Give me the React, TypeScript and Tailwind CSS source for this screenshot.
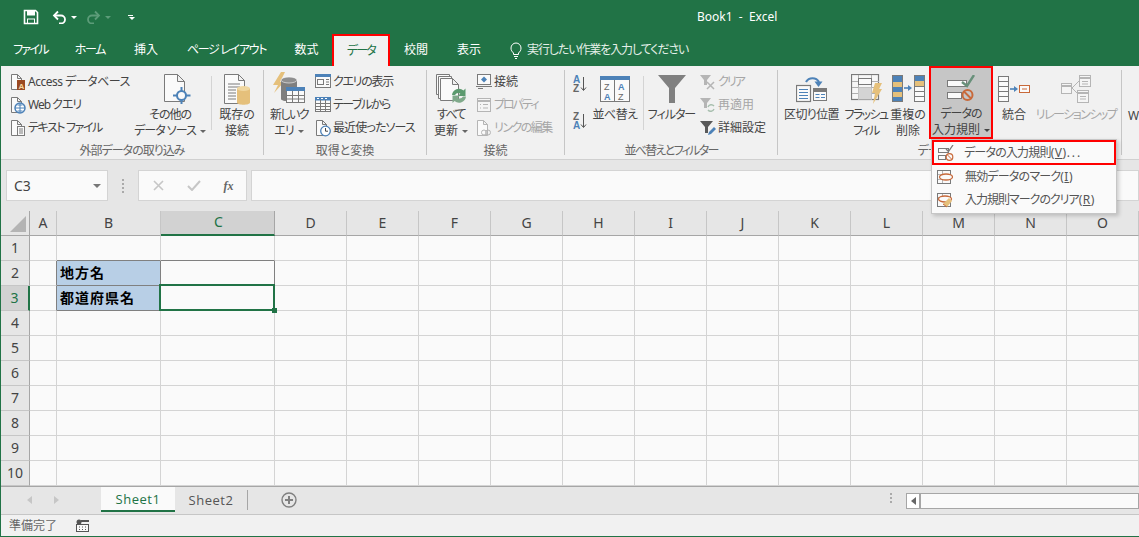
import React from "react";

type IconProps = { w: number; h: number; children: React.ReactNode };

const Icon = ({ w, h, children }: IconProps) => (
  <svg width={w} height={h} viewBox={`0 0 ${w} ${h}`} fill="none" className="block shrink-0">
    {children}
  </svg>
);

const GRAY = "#7a7a7a";
const BLUE = "#4d82b8";
const TAN = "#e5c07b";
const RUST = "#c8693a";
const FAINT = "#b5b5b5";

// small file outline used by many ribbon icons
const Doc = ({ stroke = GRAY }: { stroke?: string }) => (
  <path d="M1.5 1.5h6l4 4v11h-10zM7.5 1.5v4h4" stroke={stroke} fill="#fafafa" />
);

const Caret = ({ color = "#666" }: { color?: string }) => (
  <span
    className="inline-block ml-1 align-middle w-0 h-0 border-l-[3px] border-r-[3px] border-t-[3px] border-l-transparent border-r-transparent"
    style={{ borderTopColor: color }}
  />
);

const SaveIcon = () => (
  <Icon w={16} h={16}>
    <path d="M1.5 1.5h11l2 2v11h-13z" stroke="#fff" strokeWidth="1.6" />
    <rect x="4" y="2" width="8" height="4.5" fill="#fff" />
    <rect x="4.5" y="10" width="7" height="4.5" stroke="#fff" />
  </Icon>
);

const UndoIcon = ({ color = "#fff", flip = false }: { color?: string; flip?: boolean }) => (
  <Icon w={15} h={14}>
    <g transform={flip ? "translate(15 0) scale(-1 1)" : undefined}>
      <path d="M6 1.5 2 5.5l4 4" stroke={color} strokeWidth="1.8" />
      <path d="M2.5 5.5h6.5a4 4 0 0 1 0 8H7" stroke={color} strokeWidth="1.8" />
    </g>
  </Icon>
);

const AccessIcon = () => (
  <Icon w={16} h={18}>
    <Doc />
    <rect x="7" y="7" width="8" height="10" fill="#9b4a22" />
    <text x="8.5" y="15.5" fontSize="8" fontWeight="700" fill="#f5d7a0" fontFamily="Liberation Sans">A</text>
  </Icon>
);

const WebIcon = () => (
  <Icon w={16} h={18}>
    <Doc />
    <circle cx="10" cy="12" r="5" fill="#fff" stroke={BLUE} strokeWidth="1.5" />
    <path d="M5 12h10M10 7v10M7.5 9h5M7.5 15h5" stroke={BLUE} />
  </Icon>
);

const TextFileIcon = () => (
  <Icon w={16} h={18}>
    <Doc />
    <rect x="7.5" y="7.5" width="7" height="9" fill="#fafafa" stroke={GRAY} />
    <path d="M9 10h4M9 12h4M9 14h4" stroke={GRAY} />
  </Icon>
);

const OtherSourceIcon = () => (
  <Icon w={28} h={32}>
    <path d="M1.5 1.5h13l7 7v20h-20zM14.5 1.5v7h7" stroke={GRAY} fill="#fafafa" />
    <circle cx="18.5" cy="22.5" r="4.5" stroke={BLUE} strokeWidth="2" fill="#fafafa" />
    <path d="M18.5 14v4M18.5 27v4M10 22.5h4M23 22.5h4.5" stroke={BLUE} strokeWidth="2" />
  </Icon>
);

const ExistingIcon = () => (
  <Icon w={28} h={32}>
    <path d="M1.5 1.5h14l6 6v23h-20zM15.5 1.5v6h6" stroke={GRAY} fill="#fafafa" />
    <path d="M5 11h12M5 14h12M5 17h8M5 20h8M5 23h8M5 26h8" stroke={GRAY} />
    <path d="M14 15.5v14c0 3 13 3 13 0v-14z" fill={TAN} />
    <ellipse cx="20.5" cy="15.5" rx="6.5" ry="2.5" fill="#f0d7a0" />
  </Icon>
);

const NewQueryIcon = () => (
  <Icon w={34} h={34}>
    <path d="M9 0 1 13h5L2 21l10-11H8l5-10z" fill={TAN} />
    <path d="M9 8v19c0 3 16 3 16 0V8z" fill="#7f7f7f" />
    <ellipse cx="17" cy="8" rx="8" ry="3" fill="#8f8f8f" stroke="#fafafa" strokeWidth=".6" />
    <rect x="14.5" y="15.5" width="18" height="15" fill="#fafafa" stroke={GRAY} />
    <rect x="14" y="15" width="19" height="4" fill={BLUE} />
    <path d="M14.5 23.5h18M14.5 27h18M20.5 19v12M26.5 19v12" stroke={GRAY} />
  </Icon>
);

const ShowQueryIcon = () => (
  <Icon w={16} h={15}>
    <rect x=".5" y=".5" width="15" height="13" fill="#fafafa" stroke={GRAY} />
    <rect x="0" y="0" width="16" height="3" fill={BLUE} />
    <path d="M11 5.5h3M11 8h3M11 10.5h3" stroke={GRAY} />
    <rect x="2.5" y="5.5" width="6" height="5" stroke={GRAY} />
  </Icon>
);

const TableIcon = () => (
  <Icon w={16} h={16}>
    <rect x=".5" y=".5" width="15" height="14" fill="#fafafa" stroke={GRAY} />
    <rect x="0" y="0" width="16" height="3.5" fill={BLUE} />
    <path d="M2 1.5h2M6 1.5h2M10 1.5h2" stroke="#fff" />
    <path d="M1 6.5h14M1 9.5h14M1 12.5h14M5.5 3v11M10.5 3v11" stroke={GRAY} />
  </Icon>
);

const RecentIcon = () => (
  <Icon w={16} h={18}>
    <Doc />
    <circle cx="10.5" cy="12" r="4.8" fill="#fff" stroke={BLUE} strokeWidth="1.3" />
    <path d="M10.5 9v3.2h2.5" stroke="#444" />
  </Icon>
);

const RefreshIcon = () => (
  <Icon w={32} h={32}>
    <path d="M1.5 1.5h13v20h-13z" stroke={GRAY} fill="#fafafa" />
    <path d="M3.5 3.5h13v22h-13z" stroke={GRAY} fill="#fafafa" />
    <path d="M5.5 5.5h12l6 6v16h-18zM17.5 5.5v6h6" stroke={GRAY} fill="#fafafa" />
    <path d="M17 22a7 7 0 0 1 11.5-4.5l2-2v7.5H23l2.4-2.4a4 4 0 0 0-5.4 1.4z" fill="#5b9a6e" />
    <path d="M31 23.5a7 7 0 0 1-11.5 4.5l-2 2v-7.5H25l-2.4 2.4a4 4 0 0 0 5.4-1.4z" fill="#7fa98a" />
  </Icon>
);

const ConnectIcon = () => (
  <Icon w={16} h={15}>
    <rect x="1.5" y=".5" width="13" height="10" fill="#fafafa" stroke={GRAY} />
    <path d="M8 2.5 11 5.5 8 8.5 5 5.5z" fill={BLUE} />
    <path d="M0 12.5h16" stroke={GRAY} />
    <path d="M2 14.5h5" stroke={GRAY} />
  </Icon>
);

const PropertyIcon = () => (
  <Icon w={16} h={16}>
    <rect x="1.5" y="1.5" width="13" height="13" fill="#f5f5f5" stroke={FAINT} />
    <path d="M1 4h14" stroke={FAINT} strokeWidth="2" />
    <path d="M4 7.5h1M7 7.5h5M4 11h1M7 11h5" stroke={FAINT} />
  </Icon>
);

const LinkEditIcon = () => (
  <Icon w={16} h={18}>
    <Doc stroke={FAINT} />
    <circle cx="8" cy="13.5" r="2.5" stroke={FAINT} />
    <circle cx="12" cy="13.5" r="2.5" stroke={FAINT} />
  </Icon>
);

const SortSmall = ({ top, bottom }: { top: string; bottom: string }) => (
  <div className="flex items-center">
    <div className="flex flex-col text-[10px] leading-[9px] font-bold font-['Liberation_Sans',sans-serif]">
      <span className={top === "A" ? "text-[#4d82b8]" : "text-[#666]"}>{top}</span>
      <span className={bottom === "A" ? "text-[#4d82b8]" : "text-[#666]"}>{bottom}</span>
    </div>
    <Icon w={7} h={16}>
      <path d="M3.5 1v13M1 11.5l2.5 3 2.5-3" stroke="#555" />
    </Icon>
  </div>
);

const SortIcon = () => (
  <Icon w={30} h={26}>
    <rect x=".5" y=".5" width="29" height="25" fill="#fafafa" stroke={GRAY} />
    <rect x="0" y="0" width="30" height="4" fill={BLUE} />
    <path d="M14.5 4v21" stroke={GRAY} />
    <text x="4" y="14" fontSize="9" fill="#666" fontFamily="Liberation Sans">Z</text>
    <text x="4" y="23.5" fontSize="9" fontWeight="700" fill={BLUE} fontFamily="Liberation Sans">A</text>
    <text x="18" y="14" fontSize="9" fontWeight="700" fill={BLUE} fontFamily="Liberation Sans">A</text>
    <text x="18" y="23.5" fontSize="9" fill="#666" fontFamily="Liberation Sans">Z</text>
  </Icon>
);

const FilterIcon = () => (
  <Icon w={28} h={28}>
    <path d="M0 0h28L17 13v15h-6V13z" fill="#808080" />
  </Icon>
);

const ClearIcon = () => (
  <Icon w={16} h={16}>
    <path d="M0 1h11L7 6v5H4V6z" fill={FAINT} />
    <path d="M7 8l7 7M14 8l-7 7" stroke={FAINT} strokeWidth="1.5" />
  </Icon>
);

const ReapplyIcon = () => (
  <Icon w={16} h={16}>
    <path d="M0 1h11L7 6v5H4V6z" fill={FAINT} />
    <path d="M8 10a3.5 3.5 0 0 1 6-1M14 12a3.5 3.5 0 0 1-6 1" stroke="#a7bfae" strokeWidth="1.4" />
  </Icon>
);

const AdvancedIcon = () => (
  <Icon w={16} h={16}>
    <path d="M0 1h13L8 7v6H5V7z" fill="#595959" />
    <path d="M8 15l1-3 5-5 2 2-5 5z" fill={BLUE} />
  </Icon>
);

const SplitIcon = () => (
  <Icon w={32} h={28}>
    <path d="M10 7a7.5 7.5 0 0 1 13 0" stroke={BLUE} strokeWidth="2.2" />
    <path d="M18.5 6.5h8l-4 5.5z" fill={BLUE} />
    <rect x=".5" y="10.5" width="14" height="16" fill="#fafafa" stroke={GRAY} strokeWidth="1.2" />
    <path d="M3 14.5h9M3 17.5h9M3 20.5h9M3 23.5h9" stroke={BLUE} />
    <rect x="17.5" y="13.5" width="13" height="12" fill="#fafafa" stroke={GRAY} />
    <path d="M17 15.5h14" stroke={GRAY} strokeWidth="3" />
    <path d="M19.5 19.5h4M25 19.5h4M19.5 22.5h4M25 22.5h4" stroke={BLUE} />
  </Icon>
);

const FlashIcon = () => (
  <Icon w={32} h={30}>
    <rect x=".5" y=".5" width="27" height="25" fill="#f7f7f7" stroke={GRAY} strokeWidth="1.2" />
    <path d="M1 7.5h27M1 13.5h27M1 19.5h27M7.5 1v25M20.5 1v25" stroke="#b0b0b0" />
    <rect x="7.5" y="13.5" width="13" height="12" fill="#d4d4d4" />
    <rect x="7.5" y="4.5" width="13" height="6" fill="#fafafa" stroke={GRAY} />
    <path d="M24 9h7l-3 6h3l-9 15 2-11h-3z" fill={TAN} />
  </Icon>
);

const DedupeIcon = () => (
  <Icon w={33} h={28}>
    <rect x=".5" y=".5" width="10" height="26" fill={BLUE} stroke={GRAY} />
    <rect x="1" y="7" width="9" height="5" fill={TAN} />
    <rect x="1" y="17" width="9" height="5" fill={TAN} />
    <path d="M12 13h5" stroke={BLUE} strokeWidth="1.6" />
    <path d="M16 10l4 3-4 3z" fill={BLUE} />
    <rect x="22.5" y=".5" width="10" height="26" fill="#fafafa" stroke={GRAY} />
    <rect x="23" y="1" width="9" height="5" fill={BLUE} />
    <rect x="23" y="6" width="9" height="5" fill={TAN} />
    <path d="M23 11.5h9M23 16.5h9M23 21.5h9" stroke={GRAY} />
  </Icon>
);

const ValidationIcon = () => (
  <Icon w={28} h={26}>
    <rect x=".5" y="5.5" width="19" height="6" fill="#fafafa" stroke={GRAY} />
    <rect x=".5" y="17.5" width="14" height="6" fill="#fafafa" stroke={GRAY} />
    <path d="M15 7l5 4 7-11" stroke="#68907a" strokeWidth="2.4" />
    <circle cx="20.5" cy="20" r="5" stroke={RUST} strokeWidth="2" />
    <path d="M17 16.5l7 7" stroke={RUST} strokeWidth="2" />
  </Icon>
);

const ConsolidateIcon = () => (
  <Icon w={32} h={26}>
    <rect x=".5" y=".5" width="10" height="25" fill="#fafafa" stroke={GRAY} />
    <path d="M1 5.5h9M1 10.5h9M1 15.5h9M1 20.5h9" stroke={GRAY} />
    <path d="M12 13h5" stroke={BLUE} strokeWidth="1.6" />
    <path d="M16 10l4 3-4 3z" fill={BLUE} />
    <rect x="21.5" y="9.5" width="10" height="7" fill="#fafafa" stroke={RUST} />
    <path d="M24 13h5" stroke={RUST} />
  </Icon>
);

const RelationIcon = () => (
  <Icon w={30} h={28}>
    <rect x=".5" y="8.5" width="10" height="10" fill="#f5f5f5" stroke={FAINT} />
    <path d="M1 11h9" stroke={FAINT} strokeWidth="2" />
    <path d="M11 13 18 6M11 13l6 6" stroke={FAINT} />
    <rect x="18.5" y=".5" width="11" height="11" fill="#f5f5f5" stroke={FAINT} />
    <path d="M19 3h10" stroke={FAINT} strokeWidth="2" />
    <path d="M21 6.5h6M21 9h6" stroke={FAINT} />
    <rect x="16.5" y="15.5" width="11" height="12" fill="#f5f5f5" stroke={FAINT} />
    <path d="M17 18h10" stroke={FAINT} strokeWidth="2" />
    <path d="M19 21.5h6M19 24h6" stroke={FAINT} />
  </Icon>
);

const MenuValidIcon = () => (
  <Icon w={16} h={16}>
    <rect x=".5" y="3.5" width="10" height="4" fill="#fafafa" stroke={GRAY} />
    <rect x=".5" y="10.5" width="7" height="4" fill="#fafafa" stroke={GRAY} />
    <path d="M8 4l2.5 2.5L15 0" stroke={GRAY} strokeWidth="1.3" />
    <circle cx="11.5" cy="12" r="3.3" fill="#fafafa" stroke={RUST} strokeWidth="1.2" />
    <path d="M9.3 9.8l4.4 4.4" stroke={RUST} />
  </Icon>
);

const MenuMarkIcon = () => (
  <Icon w={16} h={16}>
    <rect x=".5" y="1.5" width="13" height="13" fill="#fafafa" stroke={GRAY} />
    <path d="M1 5.5h12M1 10.5h12M5.5 2v4M5.5 10v4" stroke={FAINT} />
    <ellipse cx="9" cy="8" rx="6.5" ry="3" fill="#fafafa" stroke={RUST} strokeWidth="1.3" />
  </Icon>
);

const MenuClearIcon = () => (
  <Icon w={16} h={16}>
    <rect x=".5" y="1.5" width="13" height="13" fill="#fafafa" stroke={GRAY} />
    <path d="M1 5.5h12M5.5 2v4" stroke={FAINT} />
    <ellipse cx="8" cy="7" rx="6.5" ry="3" fill="#fafafa" stroke={RUST} strokeWidth="1.3" />
    <path d="M6 12l6-6 3 3-5 6z" fill={TAN} />
    <path d="M6 12l4 3" stroke={RUST} />
  </Icon>
);

const Bulb = () => (
  <Icon w={12} h={17}>
    <path d="M3.5 11C2 9.5 1 8.5 1 6a5 5 0 0 1 10 0c0 2.5-1 3.5-2.5 5v1.5h-5z" stroke="#fff" />
    <path d="M4 14.5h4M5 16.5h2" stroke="#fff" />
  </Icon>
);

const SmallRow = ({
  icon,
  label,
  off = false,
  tight = "",
}: {
  icon: React.ReactNode;
  label: string;
  off?: boolean;
  tight?: string;
}) => (
  <div className={`h-[23px] flex items-center gap-[2px] whitespace-nowrap ${off ? "text-[#a6a6a6]" : ""}`}>
    <span className="w-[17px] flex justify-center">{icon}</span>
    <span className={tight}>{label}</span>
  </div>
);

const BigButton = ({
  icon,
  lines,
  caret = false,
  off = false,
  className = "",
  tight = [],
  iconClass = "",
}: {
  icon: React.ReactNode;
  lines: string[];
  caret?: boolean;
  off?: boolean;
  className?: string;
  tight?: string[];
  iconClass?: string;
}) => (
  <div className={`flex flex-col items-center shrink-0 whitespace-nowrap ${off ? "text-[#a6a6a6]" : ""} ${className}`}>
    <div className={`h-[37px] flex items-center justify-center ${iconClass}`}>{icon}</div>
    {lines.map((line, i) => (
      <div key={line} className={`h-[16px] leading-[16px] ${tight[i] ?? ""}`}>
        {line}
        {caret && i === lines.length - 1 && <Caret />}
      </div>
    ))}
  </div>
);

const Group = ({
  label,
  width,
  tight = "",
  children,
}: {
  label: string;
  width: string;
  tight?: string;
  children: React.ReactNode;
}) => (
  <div className={`h-[85px] shrink-0 flex flex-col ${width} border-r border-[#c6c6c6]`}>
    <div className="h-[73px] shrink-0 flex">{children}</div>
    <div className={`h-[12px] leading-[16px] text-center text-[#666] whitespace-nowrap ${tight}`}>{label}</div>
  </div>
);

const Ribbon = () => (
  <div className="relative h-[94px] shrink-0 bg-[#f1f1f1] border-b border-[#d0d0d0] pt-1 flex text-[12px] text-[#444]">
    <Group label="外部データの取り込み" width="w-[263px]" tight="tracking-[-1px]">
      <div className="w-[126px] ml-[8px] shrink-0">
        <SmallRow icon={<AccessIcon />} label="Access データベース" tight="tracking-[-0.5px]" />
        <SmallRow icon={<WebIcon />} label="Web クエリ" tight="tracking-[-1px]" />
        <SmallRow icon={<TextFileIcon />} label="テキスト ファイル" tight="tracking-[-1.4px]" />
      </div>
      <BigButton
        icon={<OtherSourceIcon />}
        lines={["その他の", "データ ソース"]}
        caret
        className="w-[68px] pl-[2px]"
        tight={["tracking-[-1px]", "tracking-[-1px]"]}
        iconClass="ml-[13px]"
      />
      <div className="w-px h-[54px] mt-[6px] ml-[8px] bg-[#d4d4d4] shrink-0" />
      <BigButton icon={<ExistingIcon />} lines={["既存の", "接続"]} className="w-[50px]" />
    </Group>

    <Group label="取得と変換" width="w-[163px]">
      <BigButton
        icon={<NewQueryIcon />}
        lines={["新しいク", "エリ"]}
        caret
        className="w-[50px]"
        tight={["tracking-[-1.5px]", "tracking-[-1px]"]}
      />
      <div className="shrink-0">
        <SmallRow icon={<ShowQueryIcon />} label="クエリの表示" tight="tracking-[-1.3px]" />
        <SmallRow icon={<TableIcon />} label="テーブルから" tight="tracking-[-1.5px]" />
        <SmallRow icon={<RecentIcon />} label="最近使ったソース" tight="tracking-[-0.9px]" />
      </div>
    </Group>

    <Group label="接続" width="w-[138px]">
      <BigButton
        icon={<RefreshIcon />}
        lines={["すべて", "更新"]}
        caret
        className="w-[48px]"
        tight={["tracking-[-1.5px]", ""]}
      />
      <div className="shrink-0">
        <SmallRow icon={<ConnectIcon />} label="接続" />
        <SmallRow icon={<PropertyIcon />} label="プロパティ" off tight="tracking-[-2px]" />
        <SmallRow icon={<LinkEditIcon />} label="リンクの編集" off tight="tracking-[-1.5px]" />
      </div>
    </Group>

    <Group label="並べ替えとフィルター" width="w-[213px]" tight="tracking-[-1.7px]">
      <div className="w-[27px] pl-[8px] shrink-0 flex flex-col pt-[5px] gap-[19px]">
        <SortSmall top="A" bottom="Z" />
        <SortSmall top="Z" bottom="A" />
      </div>
      <BigButton icon={<SortIcon />} lines={["並べ替え"]} className="w-[46px]" tight={["tracking-[-0.5px]"]} />
      <div className="w-px h-[54px] mt-[6px] ml-[5px] bg-[#d4d4d4] shrink-0" />
      <BigButton icon={<FilterIcon />} lines={["フィルター"]} className="w-[55px]" tight={["tracking-[-1px]"]} />
      <div className="shrink-0">
        <SmallRow icon={<ClearIcon />} label="クリア" off tight="tracking-[-2px]" />
        <SmallRow icon={<ReapplyIcon />} label="再適用" off />
        <SmallRow icon={<AdvancedIcon />} label="詳細設定" />
      </div>
    </Group>

    <Group label="データ ツール" width="w-[344px]" tight="tracking-[-1px]">
      <BigButton
        icon={<SplitIcon />}
        lines={["区切り位置"]}
        className="w-[67px]"
        tight={["tracking-[-0.6px]"]}
      />
      <BigButton
        icon={<FlashIcon />}
        lines={["フラッシュ", "フィル"]}
        className="w-[42px]"
        tight={["tracking-[-1.6px]", "tracking-[-1.6px]"]}
        iconClass="ml-[2px]"
      />
      <BigButton icon={<DedupeIcon />} lines={["重複の", "削除"]} className="w-[42px]" />
      <div className="-mt-1 h-[73px] w-[64px] shrink-0 border-2 border-[#ff0000] bg-[#c6c6c6] flex flex-col items-center whitespace-nowrap">
        <div className="h-[36px] shrink-0 pt-[3px] flex items-center justify-center">
          <ValidationIcon />
        </div>
        <div className="h-[16px] shrink-0 leading-[16px] mt-[2px] tracking-[-1px]">データの</div>
        <div className="h-[16px] shrink-0 leading-[16px]">
          入力規則
          <Caret color="#444" />
        </div>
      </div>
      <BigButton icon={<ConsolidateIcon />} lines={["統合"]} className="w-[42px]" />
      <BigButton
        icon={<RelationIcon />}
        lines={["リレーションシップ"]}
        off
        className="w-[82px]"
        tight={["tracking-[-1.5px]"]}
      />
    </Group>

    <div className="flex-1 overflow-hidden pl-[6px] pt-[37px]">W</div>

    <div className="absolute left-[930px] top-[73px] w-[186px] h-[75px] bg-[#fafafa] border border-[#c6c6c6] shadow-[2px_2px_4px_rgba(0,0,0,0.18)] text-[#555] flex flex-col">
      <div className="h-[25px] border-2 border-[#ff0000] flex items-center pl-[4px] gap-[10px] whitespace-nowrap">
        <MenuValidIcon />
        <span className="tracking-[-0.8px]">
          データの入力規則
          <span className="tracking-[0.5px]">
            (<u>V</u>)
          </span>
          <span className="tracking-[2px]">...</span>
        </span>
      </div>
      <div className="h-[24px] pb-px flex items-center pl-[5px] gap-[12px] whitespace-nowrap">
        <MenuMarkIcon />
        <span className="tracking-[-0.8px]">
          無効データのマーク<span className="tracking-[0.5px]">(<u>I</u>)</span>
        </span>
      </div>
      <div className="h-[24px] pb-[2px] flex items-center pl-[5px] gap-[12px] whitespace-nowrap">
        <MenuClearIcon />
        <span className="tracking-[-1px]">
          入力規則マークのクリア<span className="tracking-[0.5px]">(<u>R</u>)</span>
        </span>
      </div>
    </div>
  </div>
);

const TABS = [
  { label: "ファイル", w: "w-[59px]", t: "tracking-[-1.7px]" },
  { label: "ホーム", w: "w-[60px]", t: "tracking-[-1.3px]" },
  { label: "挿入", w: "w-[52px]", t: "" },
  { label: "ページ レイアウト", w: "w-[109px]", t: "tracking-[-1.3px]" },
  { label: "数式", w: "w-[51px]", t: "" },
  { label: "データ", w: "w-[58px]", t: "tracking-[-1.7px]", active: true },
  { label: "校閲", w: "w-[52px]", t: "" },
  { label: "表示", w: "w-[54px]", t: "" },
];

const TitleBar = () => (
  <div className="bg-[#217346] text-white text-[12px] shrink-0">
    <div className="h-[34px] flex items-center">
      <div className="w-[696px] flex items-center pl-[22px] shrink-0">
        <SaveIcon />
        <div className="ml-[13px]">
          <UndoIcon />
        </div>
        <Caret color="#fff" />
        <div className="ml-[9px]">
          <UndoIcon color="#5c9c79" flip />
        </div>
        <Caret color="#5c9c79" />
        <div className="ml-[14px] flex flex-col items-center gap-[1px]">
          <div className="w-[5px] h-px bg-white" />
          <Caret color="#fff" />
        </div>
      </div>
      <span className="whitespace-pre">Book1  -  Excel</span>
    </div>
    <div className="h-[32px] flex">
      {TABS.map((t) => (
        <div
          key={t.label}
          className={`${t.w} ${t.t} shrink-0 flex items-center justify-center whitespace-nowrap ${
            t.active ? "bg-[#f1f1f1] text-[#217346] border-2 border-b-0 border-[#ff0000]" : ""
          }`}
        >
          {t.label}
        </div>
      ))}
      <div className="ml-[14px] flex items-center gap-[5px] whitespace-nowrap text-[#e4efe8]">
        <Bulb />
        <span className="tracking-[-1.1px]">実行したい作業を入力してください</span>
      </div>
    </div>
  </div>
);

const FormulaBar = () => (
  <div className="h-[51px] shrink-0 bg-[#e6e6e6] pt-[10px] pl-[5px] flex items-start text-[#555]">
    <div className="w-[102px] h-[31px] bg-[#fafafa] border border-[#d4d4d4] flex items-center justify-between pl-[7px] pr-[6px] text-[14px] text-[#444]">
      C3
      <span className="w-0 h-0 border-l-[4px] border-r-[4px] border-t-[4px] border-l-transparent border-r-transparent border-t-[#777]" />
    </div>
    <div className="w-[30px] h-[31px] flex flex-col items-center justify-center gap-[2px] shrink-0">
      <div className="w-[2px] h-[2px] bg-[#aaa]" />
      <div className="w-[2px] h-[2px] bg-[#aaa]" />
      <div className="w-[2px] h-[2px] bg-[#aaa]" />
      <div className="w-[2px] h-[2px] bg-[#aaa]" />
    </div>
    <div className="w-[109px] h-[31px] bg-[#fafafa] border border-[#d4d4d4] flex items-center shrink-0">
      <div className="w-[39px] flex justify-center">
        <Icon w={11} h={11}>
          <path d="M1 1l9 9M10 1l-9 9" stroke="#c6c6c6" strokeWidth="1.6" />
        </Icon>
      </div>
      <div className="w-[31px] flex justify-center">
        <Icon w={14} h={11}>
          <path d="M1 6l4 4 8-9" stroke="#c6c6c6" strokeWidth="2" />
        </Icon>
      </div>
      <div className="w-[37px] pl-[2px] text-center italic font-['Liberation_Serif',serif] font-bold text-[12px] text-[#666]">
        fx
      </div>
    </div>
    <div className="flex-1 h-[31px] ml-[4px] bg-[#fafafa] border border-[#d4d4d4]" />
  </div>
);

const COLS = ["A", "B", "C", "D", "E", "F", "G", "H", "I", "J", "K", "L", "M", "N", "O"];
const ROWS = [1, 2, 3, 4, 5, 6, 7, 8, 9, 10];

const Cell = ({ row, col }: { row: number; col: string }) => {
  const boxed = (row === 2 || row === 3) && (col === "B" || col === "C");
  const filled = boxed && col === "B";
  const above = row === 1 && (col === "B" || col === "C");
  const leftOfBox = (row === 2 || row === 3) && col === "A";
  const selected = row === 3 && col === "C";
  return (
    <div
      className={`relative h-[25px] border-r border-b flex items-center pl-[3px] pb-[2px] text-[14px] tracking-[1px] font-bold text-black ${
        boxed ? "border-[#808080]" : above ? "border-r-[#d4d4d4] border-b-[#808080]" : leftOfBox ? "border-r-[#808080] border-b-[#d4d4d4]" : "border-[#d4d4d4]"
      } ${filled ? "bg-[#b8cfe6]" : ""}`}
    >
      {filled && (row === 2 ? "地方名" : "都道府県名")}
      {selected && (
        <>
          <div className="absolute z-10 -left-[2px] -top-[2px] w-[116px] h-[27px] border-2 border-[#217346]" />
          <div className="absolute z-10 -right-[3px] -bottom-[3px] w-[5px] h-[5px] bg-[#217346]" />
        </>
      )}
    </div>
  );
};

const Sheet = () => (
  <div className="grid grid-cols-[29px_27px_104px_114px_repeat(12,72px)] grid-rows-[25px_repeat(10,25px)] shrink-0 bg-[#fafafa] text-[#444]">
    <div className="bg-[#e6e6e6] border-r border-b border-[#a6a6a6] flex items-end justify-end pr-[3px] pb-[3px]">
      <div className="w-0 h-0 border-b-[16px] border-l-[16px] border-b-[#b4b4b4] border-l-transparent" />
    </div>
    {COLS.map((c) => (
      <div
        key={c}
        className={`flex items-center justify-center text-[14px] pb-[2px] border-r ${
          c === "C"
            ? "bg-[#d2d2d2] border-b-2 border-b-[#217346] border-r-[#a6a6a6] text-[#217346] pl-[2px]"
            : "bg-[#e6e6e6] border-b border-b-[#a6a6a6] border-r-[#c6c6c6]"
        }`}
      >
        {c}
      </div>
    ))}
    {ROWS.map((r) => (
      <React.Fragment key={r}>
        <div
          className={`flex items-center justify-center text-[14px] pb-[2px] border-b border-b-[#c6c6c6] ${
            r === 3
              ? "bg-[#d2d2d2] border-r-2 border-r-[#217346] text-[#217346]"
              : "bg-[#e6e6e6] border-r border-r-[#a6a6a6]"
          }`}
        >
          {r}
        </div>
        {COLS.map((c) => (
          <Cell key={c} row={r} col={c} />
        ))}
      </React.Fragment>
    ))}
  </div>
);

const TabBar = () => (
  <div className="h-[29px] shrink-0 bg-[#e6e6e6] border-t border-t-[#a6a6a6] border-b border-b-[#c6c6c6] flex text-[13px] tracking-[0.5px] text-[#555] font-['Open_Sans',sans-serif]">
    <div className="w-[100px] shrink-0 flex items-center pl-[26px] gap-[22px] pb-[2px]">
      <span className="w-0 h-0 border-y-[4px] border-r-[5px] border-y-transparent border-r-[#c6c6c6]" />
      <span className="w-0 h-0 border-y-[4px] border-l-[5px] border-y-transparent border-l-[#c6c6c6]" />
    </div>
    <div className="w-[74px] h-[25px] shrink-0 bg-[#fafafa] border-b-2 border-[#217346] text-[#217346] flex items-center justify-center pt-[2px]">
      Sheet1
    </div>
    <div className="w-[72px] h-[25px] shrink-0 flex items-center justify-center pt-[2px]">Sheet2</div>
    <div className="w-px h-[20px] mt-[3px] bg-[#a6a6a6] shrink-0" />
    <div className="ml-[33px] pt-[5px] shrink-0">
      <Icon w={16} h={16}>
        <circle cx="8" cy="8" r="7" stroke="#808080" strokeWidth="1.4" />
        <path d="M4 8h8M8 4v8" stroke="#808080" strokeWidth="2" />
      </Icon>
    </div>
    <div className="ml-[593px] pt-[6px] flex flex-col gap-[2px] shrink-0">
      <div className="w-[2px] h-[2px] bg-[#aaa]" />
      <div className="w-[2px] h-[2px] bg-[#aaa]" />
      <div className="w-[2px] h-[2px] bg-[#aaa]" />
    </div>
    <div className="ml-[14px] mt-[6px] h-[16px] flex-1 border border-[#a6a6a6] bg-[#fafafa] flex">
      <div className="w-[14px] border-r-2 border-[#a6a6a6] bg-white flex items-center justify-center">
        <span className="w-0 h-0 border-y-[4px] border-r-[5px] border-y-transparent border-r-[#666]" />
      </div>
    </div>
  </div>
);

const StatusBar = () => (
  <div className="flex-1 bg-[#f1f1f1] flex items-center pl-[8px] text-[12px] text-[#666]">
    準備完了
    <div className="ml-[19px]">
      <Icon w={13} h={13}>
        <circle cx="3" cy="3" r="2.5" fill="#555" />
        <rect x="5" y="1" width="8" height="2" fill="#555" />
        <rect x=".5" y="5.5" width="12" height="7" fill="#fafafa" stroke="#555" />
        <path d="M3 8h1M6 8h1M9 8h1M3 10.5h1M6 10.5h1M9 10.5h1" stroke="#555" />
      </Icon>
    </div>
  </div>
);

export default function App() {
  return (
    <div className="w-[1139px] h-[537px] overflow-hidden flex flex-col bg-[#217346] border-l border-b border-[#217346] font-['Noto_Sans','Noto_Sans_CJK_JP',sans-serif] [font-feature-settings:'palt']">
      <TitleBar />
      <Ribbon />
      <FormulaBar />
      <Sheet />
      <TabBar />
      <StatusBar />
    </div>
  );
}
